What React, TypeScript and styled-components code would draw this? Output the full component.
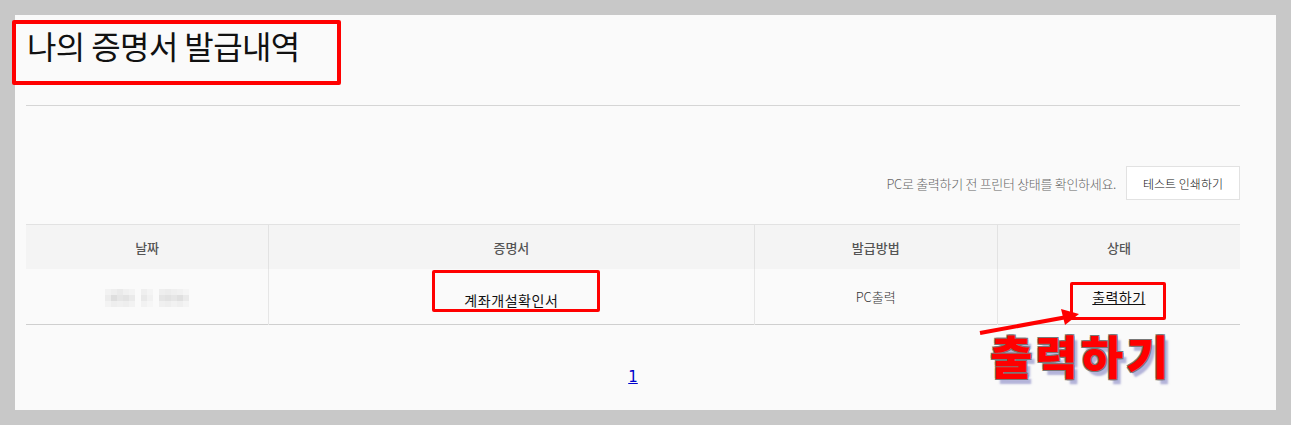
import React from 'react';
import styled, { createGlobalStyle } from 'styled-components';

const GlobalStyle = createGlobalStyle`
  html, body {
    margin: 0;
    padding: 0;
    background: #c8c8c8;
    font-family: "Noto Sans CJK KR", "Noto Sans", sans-serif;
  }
`;

const Page = styled.div`
  padding: 15px;
  height: 425px;
  box-sizing: border-box;
`;

const Panel = styled.div`
  position: relative;
  box-sizing: border-box;
  width: 1261px;
  height: 395px;
  padding: 0 36px 0 11px;
  background: #fafafa;
`;

const Header = styled.div`
  height: 91px;
  border-bottom: 1px solid #d5d5d5;
  box-sizing: border-box;
  padding-top: 9px;
`;

const Title = styled.h1`
  margin: 0 0 0 1px;
  font-size: 32px;
  font-weight: 400;
  line-height: 42px;
  color: #111;
  letter-spacing: -0.6px;
`;

const Toolbar = styled.div`
  display: flex;
  justify-content: flex-end;
  align-items: center;
  gap: 10px;
  margin-top: 60px;
`;

const Notice = styled.span`
  font-size: 13px;
  font-weight: 300;
  color: #666;
  letter-spacing: -0.3px;
`;

const TestButton = styled.button`
  box-sizing: border-box;
  width: 114px;
  height: 34px;
  background: #fff;
  border: 1px solid #e2e2e2;
  font-family: inherit;
  font-size: 12px;
  font-weight: 300;
  color: #111;
  cursor: pointer;
`;

const Table = styled.table`
  width: 100%;
  margin-top: 24px;
  border-collapse: collapse;
  table-layout: fixed;
  border-top: 1px solid #e2e2e2;
  border-bottom: 1px solid #cfcfcf;
`;

const Th = styled.th<{ $w?: string }>`
  width: ${(p) => p.$w ?? 'auto'};
  height: 44px;
  padding: 0;
  background: #f4f4f4;
  font-size: 13px;
  font-weight: 500;
  color: #555;
  & + & {
    border-left: 1px solid #e2e2e2;
  }
`;

const Td = styled.td`
  height: 55px;
  padding: 0;
  text-align: center;
  font-size: 13px;
  font-weight: 300;
  color: #333;
  & + & {
    border-left: 1px solid #e6e6e6;
  }
`;

const CertName = styled.span`
  position: relative;
  top: 3px;
  font-size: 14px;
  font-weight: 400;
  letter-spacing: 0.6px;
  color: #111;
`;

const PrintLink = styled.a`
  font-size: 14px;
  font-weight: 400;
  letter-spacing: 0.4px;
  color: #111;
  text-decoration: underline;
  cursor: pointer;
`;

const Pager = styled.div`
  display: flex;
  justify-content: center;
  margin-top: 43px;
`;

const PageLink = styled.a`
  font-size: 15px;
  color: #0000cc;
  text-decoration: underline;
  font-family: "DejaVu Sans", sans-serif;
`;

const Mark = styled.div<{ $x: number; $y: number; $w: number; $h: number; $b?: number }>`
  position: absolute;
  left: ${(p) => p.$x}px;
  top: ${(p) => p.$y}px;
  width: ${(p) => p.$w}px;
  height: ${(p) => p.$h}px;
  box-sizing: border-box;
  border: ${(p) => p.$b ?? 3}px solid #ff0000;
  border-radius: 2px;
  pointer-events: none;
`;

const Arrow = styled.svg`
  position: absolute;
  left: 960px;
  top: 280px;
  overflow: visible;
`;

const BigLabel = styled.div`
  position: absolute;
  left: 975px;
  top: 306px;
  font-size: 46px;
  font-weight: 900;
  letter-spacing: 3px;
  color: #ff0000;
  text-shadow:
    -1px -1px 0 #777, 1px -1px 0 #777, -1px 1px 0 #777, 1px 1px 0 #777,
    4px 5px 2px rgba(120, 120, 190, 0.55);
`;

const blurCells = [
  '#f2f2f2', '#eeeeee', '#eaeaea', '#f0f0f0', '#f3f3f3', '#fafafa', '#efefef', '#f4f4f4', '#fafafa', '#eeeeee', '#ececec', '#efefef', '#f1f1f1', '#f5f5f5',
  '#ececec', '#dedede', '#e6e6e6', '#e3e3e3', '#eaeaea', '#fafafa', '#e9e9e9', '#f1f1f1', '#fafafa', '#e5e5e5', '#e2e2e2', '#e6e6e6', '#e0e0e0', '#eaeaea',
  '#f3f3f3', '#eeeeee', '#f0f0f0', '#eeeeee', '#f2f2f2', '#fafafa', '#f2f2f2', '#f6f6f6', '#fafafa', '#f0f0f0', '#eeeeee', '#f2f2f2', '#efefef', '#f4f4f4',
];

const BlurredDate = () => (
  <svg width="84" height="18" viewBox="0 0 84 18" style={{ verticalAlign: 'middle' }}>
    {blurCells.map((c, i) => (
      <rect key={i} x={(i % 14) * 6} y={Math.floor(i / 14) * 6} width="6" height="6" fill={c} />
    ))}
  </svg>
);

export default function App() {
  return (
    <>
      <GlobalStyle />
      <Page>
        <Panel>
          <Header>
            <Title>나의 증명서 발급내역</Title>
          </Header>
          <Toolbar>
            <Notice>PC로 출력하기 전 프린터 상태를 확인하세요.</Notice>
            <TestButton>테스트 인쇄하기</TestButton>
          </Toolbar>
          <Table>
            <thead>
              <tr>
                <Th $w="20%">날짜</Th>
                <Th $w="40%">증명서</Th>
                <Th $w="20%">발급방법</Th>
                <Th $w="20%">상태</Th>
              </tr>
            </thead>
            <tbody>
              <tr>
                <Td>
                  <BlurredDate />
                </Td>
                <Td>
                  <CertName>계좌개설확인서</CertName>
                </Td>
                <Td>PC출력</Td>
                <Td>
                  <PrintLink>출력하기</PrintLink>
                </Td>
              </tr>
            </tbody>
          </Table>
          <Pager>
            <PageLink>1</PageLink>
          </Pager>

          <Mark $x={-3} $y={5} $w={329} $h={65} $b={4} />
          <Mark $x={417} $y={255} $w={168} $h={42} />
          <Mark $x={1055} $y={267} $w={96} $h={38} />
          <Arrow width="120" height="50">
            <line x1="5" y1="38" x2="92" y2="22" stroke="#ff0000" strokeWidth="4" />
            <polygon points="104,19 86,14 90,30" fill="#ff0000" />
          </Arrow>
          <BigLabel>출력하기</BigLabel>
        </Panel>
      </Page>
    </>
  );
}
